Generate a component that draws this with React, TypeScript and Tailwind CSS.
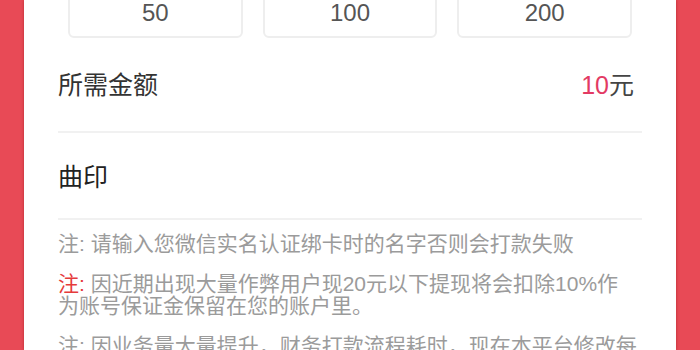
import React from "react";

const font = { fontFamily: '"Liberation Sans", "Noto Sans CJK SC", sans-serif' };

export default function App() {
  return (
    <div
      className="w-[700px] h-[350px] overflow-hidden bg-[#e84a56] flex justify-center"
      style={font}
    >
      <div className="w-[652px] h-full bg-white px-[34px] shadow-[0_0_3px_rgba(120,0,0,0.45)]">
        {/* Amount choices */}
        <div className="-mt-[12px] flex gap-[20px] px-[10px]">
          {["50", "100", "200"].map((v) => (
            <div
              key={v}
              className="h-[50px] w-[175px] rounded-[6px] border-2 border-[#eeeeee] flex items-center justify-center text-[24px] text-[#555555]"
            >
              {v}
            </div>
          ))}
        </div>

        {/* Required amount */}
        <div className="h-[95px] flex items-center justify-between border-b-2 border-[#f1f1f1] pt-[2px]">
          <span className="text-[25px] text-[#333333]">所需金额</span>
          <span className="text-[25px] text-[#444444] pr-[8px]">
            <span className="text-[#e33a63]">10</span>元
          </span>
        </div>

        {/* Name */}
        <div className="h-[87px] flex items-center border-b-2 border-[#f1f1f1] pt-[5px]">
          <span className="text-[25px] text-[#222222]">曲印</span>
        </div>

        {/* Notes */}
        <div className="pt-[13px] text-[21px] leading-[22px] text-[#9b9b9b] flex flex-col gap-[18px]">
          <p>注: 请输入您微信实名认证绑卡时的名字否则会打款失败</p>
          <p className="whitespace-nowrap">
            <span className="text-[#e53b3b]">注:</span> 因近期出现大量作弊用户现20元以下提现将会扣除10%作
            <br />
            为账号保证金保留在您的账户里。
          </p>
          <p className="whitespace-nowrap">注: 因业务量大量提升，财务打款流程耗时，现在本平台修改每</p>
        </div>
      </div>
    </div>
  );
}
